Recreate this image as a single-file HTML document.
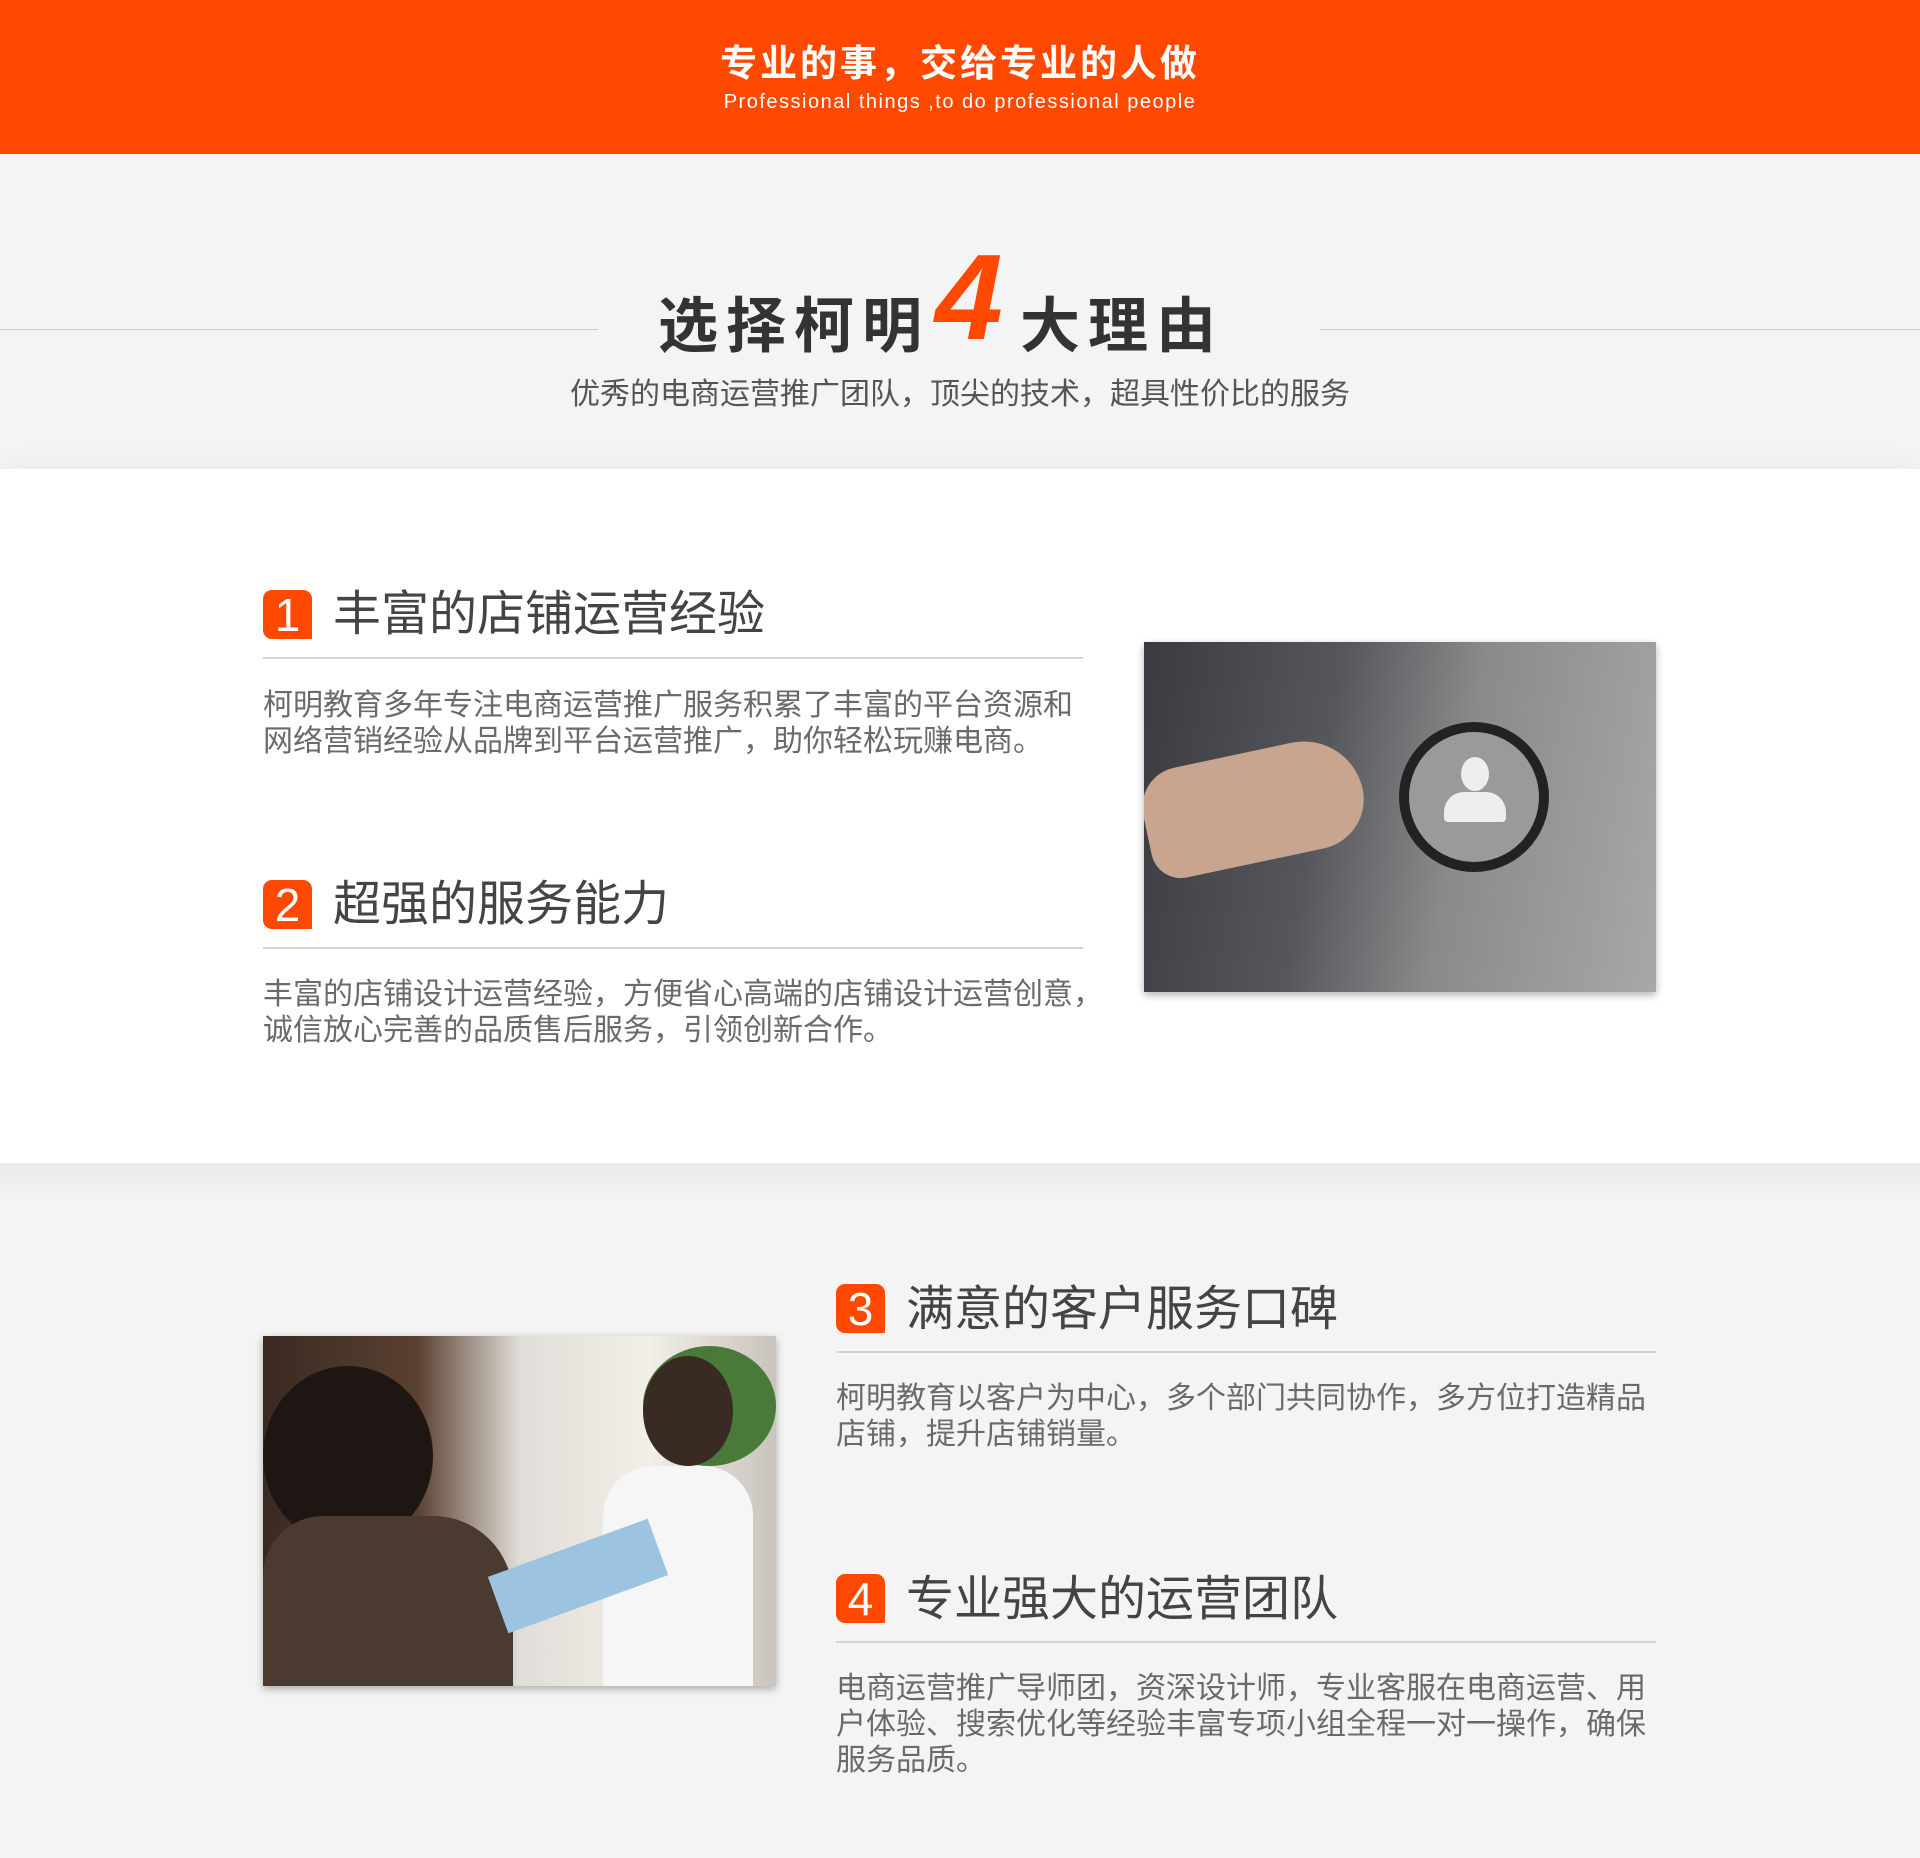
<!DOCTYPE html>
<html><head><meta charset="utf-8"><style>
*{margin:0;padding:0;box-sizing:border-box}
body{width:1920px;height:1858px;background:#f4f4f4;font-family:"Liberation Sans","Noto Sans CJK SC",sans-serif;position:relative;overflow:hidden}
.a{position:absolute}
.hdr{left:0;top:0;width:1920px;height:154px;background:#ff4800;color:#fff;text-align:center}
.wht{left:0;top:469px;width:1920px;height:694px;background:#fff;box-shadow:0 0 30px rgba(0,0,0,.06)}
.badge{width:49px;height:49px;background:#ff4800;color:#fff;font-size:46px;line-height:50px;text-align:center;border-radius:9px 9px 0 9px;font-family:"Liberation Sans",sans-serif}
.h{font-size:48px;color:#444;white-space:nowrap;line-height:60px}
.ln{height:2px;background:#d4d4d4}
.p{font-size:30px;color:#6a6a6a;line-height:36px;white-space:nowrap}
</style></head><body>
<div class="a hdr">
 <div class="a" style="left:0;width:1920px;top:33px;font-size:37px;font-weight:bold;letter-spacing:3px">专业的事，交给专业的人做</div>
 <div class="a" style="left:0;width:1920px;top:91px;font-size:20px;letter-spacing:1.5px">Professional things ,to do professional people</div>
</div>
<div class="a" style="left:0;top:329px;width:598px;height:1px;background:#ccc"></div>
<div class="a" style="left:1320px;top:329px;width:600px;height:1px;background:#ccc"></div>
<div class="a" style="left:658px;top:278px;font-size:60px;font-weight:bold;color:#333;letter-spacing:8px;white-space:nowrap">选择柯明</div>
<div class="a" style="left:935px;top:232px;font-size:122px;font-weight:bold;font-style:italic;color:#ff4800;line-height:130px">4</div>
<div class="a" style="left:1020px;top:278px;font-size:60px;font-weight:bold;color:#333;letter-spacing:8px;white-space:nowrap">大理由</div>
<div class="a" style="left:0;width:1920px;top:369px;text-align:center;font-size:30px;color:#555">优秀的电商运营推广团队，顶尖的技术，超具性价比的服务</div>
<div class="a wht"></div>

<div class="a badge" style="left:263px;top:590px">1</div>
<div class="a h" style="left:333px;top:585px">丰富的店铺运营经验</div>
<div class="a ln" style="left:263px;top:657px;width:820px"></div>
<div class="a p" style="left:263px;top:688px">柯明教育多年专注电商运营推广服务积累了丰富的平台资源和<br>网络营销经验从品牌到平台运营推广，助你轻松玩赚电商。</div>

<div class="a badge" style="left:263px;top:880px">2</div>
<div class="a h" style="left:333px;top:875px">超强的服务能力</div>
<div class="a ln" style="left:263px;top:947px;width:820px"></div>
<div class="a p" style="left:263px;top:977px">丰富的店铺设计运营经验，方便省心高端的店铺设计运营创意，<br>诚信放心完善的品质售后服务，引领创新合作。</div>

<div class="a" style="left:1144px;top:642px;width:512px;height:350px;background:linear-gradient(100deg,#3a3b40 0%,#55575c 35%,#8a8a8a 60%,#a8a8a8 100%);box-shadow:0 3px 8px rgba(0,0,0,.3);overflow:hidden">
 <div class="a" style="left:0;top:110px;width:220px;height:110px;background:#c9a590;border-radius:40px 60px 50px 30px;transform:rotate(-12deg)"></div>
 <div class="a" style="left:255px;top:80px;width:150px;height:150px;border:10px solid #222;border-radius:50%;background:#9a9a9a"></div>
 <div class="a" style="left:317px;top:115px;width:28px;height:34px;background:#eee;border-radius:50%"></div>
 <div class="a" style="left:300px;top:150px;width:62px;height:30px;background:#eee;border-radius:20px 20px 4px 4px"></div>
</div>

<div class="a" style="left:0;top:1163px;width:1920px;height:40px;background:linear-gradient(#e9e9e9,#f4f4f4)"></div>

<div class="a" style="left:263px;top:1336px;width:513px;height:350px;background:linear-gradient(90deg,#3a2a22 0%,#5a4030 30%,#e0ddd8 50%,#f2efe8 75%,#c9c4bc 100%);box-shadow:0 3px 8px rgba(0,0,0,.3);overflow:hidden">
 <div class="a" style="left:380px;top:10px;width:133px;height:120px;background:#4a7a3a;border-radius:50%"></div>
 <div class="a" style="left:380px;top:20px;width:90px;height:110px;background:#3a2a24;border-radius:50%"></div>
 <div class="a" style="left:340px;top:130px;width:150px;height:220px;background:#f6f6f6;border-radius:50px 50px 0 0"></div>
 <div class="a" style="left:0;top:30px;width:170px;height:180px;background:#1e1612;border-radius:50%"></div>
 <div class="a" style="left:0;top:180px;width:250px;height:170px;background:#4a3a30;border-radius:60px 80px 0 0"></div>
 <div class="a" style="left:230px;top:210px;width:170px;height:60px;background:#9cc3df;transform:rotate(-20deg)"></div>
</div>

<div class="a badge" style="left:836px;top:1284px">3</div>
<div class="a h" style="left:906px;top:1280px">满意的客户服务口碑</div>
<div class="a ln" style="left:836px;top:1351px;width:820px"></div>
<div class="a p" style="left:836px;top:1381px">柯明教育以客户为中心，多个部门共同协作，多方位打造精品<br>店铺，提升店铺销量。</div>

<div class="a badge" style="left:836px;top:1574px">4</div>
<div class="a h" style="left:906px;top:1570px">专业强大的运营团队</div>
<div class="a ln" style="left:836px;top:1641px;width:820px"></div>
<div class="a p" style="left:836px;top:1671px">电商运营推广导师团，资深设计师，专业客服在电商运营、用<br>户体验、搜索优化等经验丰富专项小组全程一对一操作，确保<br>服务品质。</div>
</body></html>
